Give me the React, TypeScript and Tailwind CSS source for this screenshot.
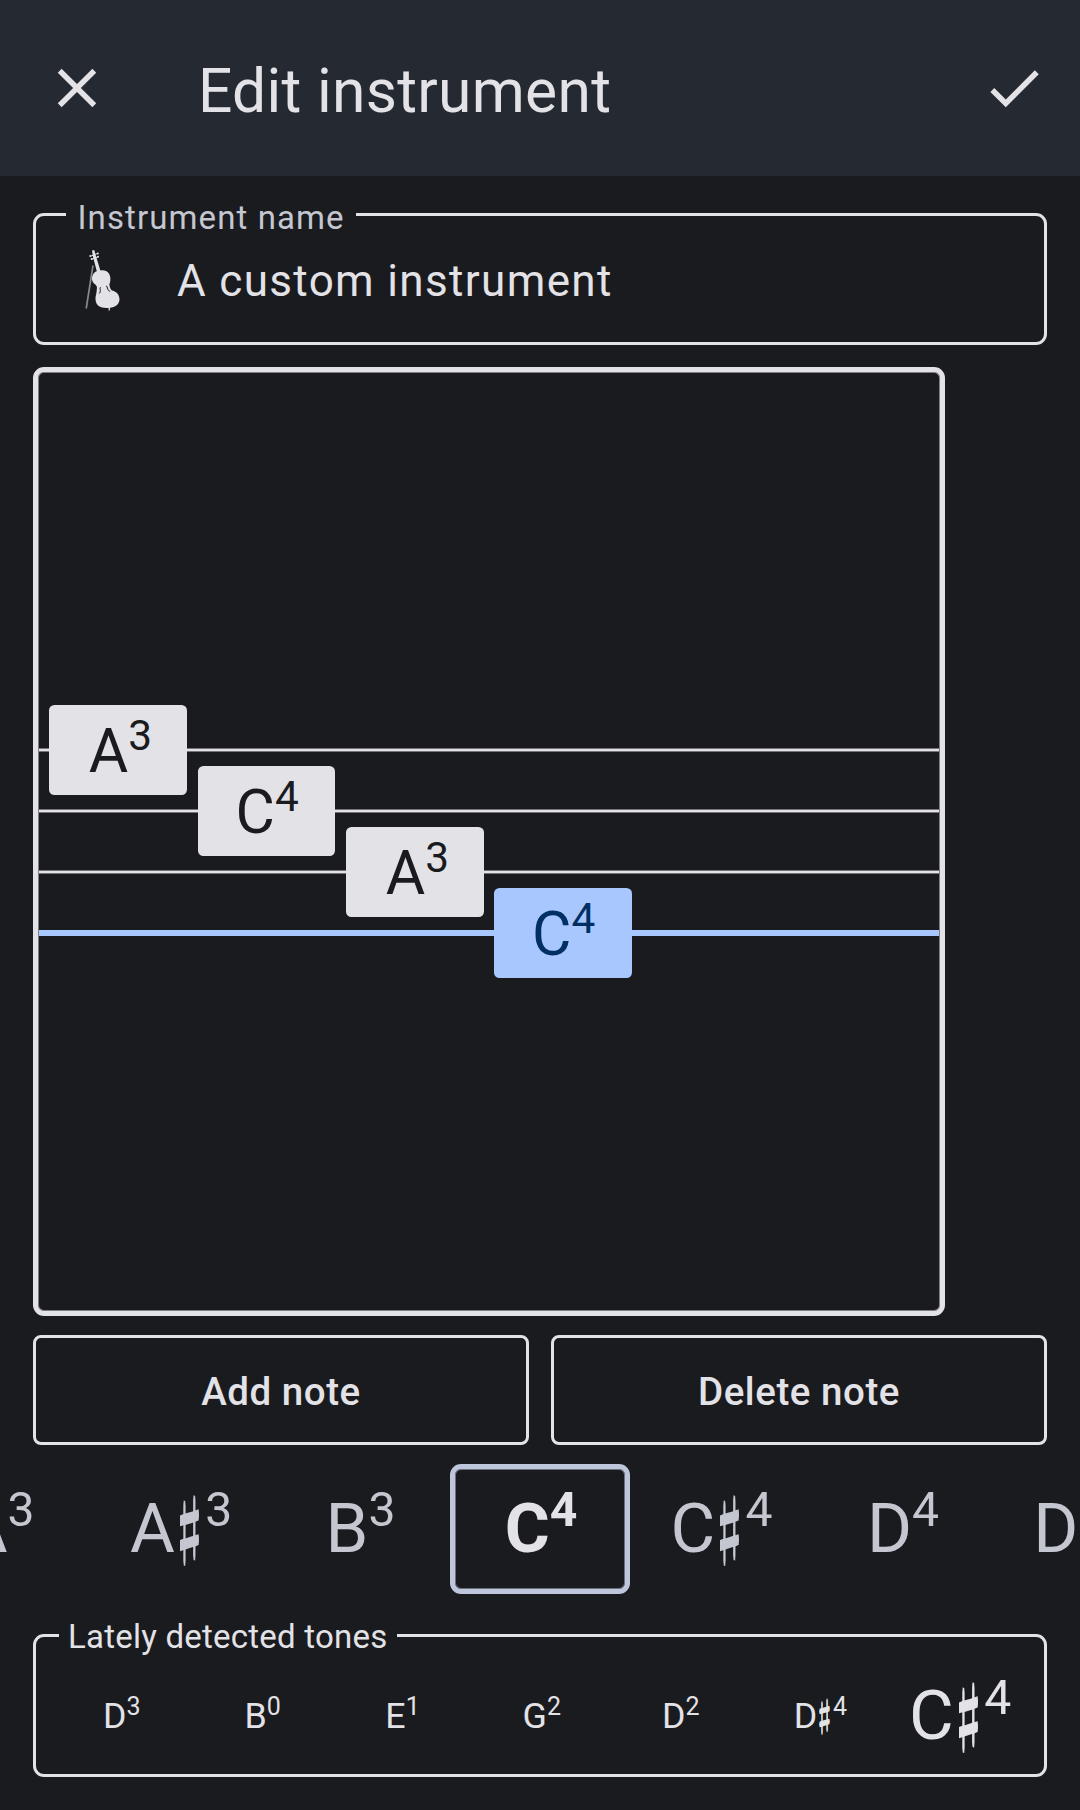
import type { ReactNode } from "react";

type Tone = { name: string; octave: number; sharp?: boolean };

// Optical correction of each letter inside its cell.
const nudge: Record<string, string> = {
  A: "pl-[0.09em]",
  B: "pl-[0.06em]",
  C: "pl-[0.03em]",
  D: "pl-0",
  E: "pl-[0.07em]",
  G: "pl-[0.04em]",
  "A♯": "pl-[0.12em]",
};

function Note({ name, octave, sharp, raise = "align-[0.52em]" }: Tone & { raise?: string }) {
  return (
    <span className={"whitespace-nowrap leading-none " + (nudge[sharp ? name + "♯" : name] ?? "")}>
      {name}
      {sharp && (
        <span className="inline-flex w-[0.442em] origin-[50%_60%] justify-center font-['DejaVu_Sans',sans-serif] leading-[0] [text-shadow:0_0.022em,0_-0.022em] [transform:translate(-0.012em,0.06em)_skewY(25deg)_scale(0.86,1.4)]">
          ♯
        </span>
      )}
      <span className={"text-[0.7em] leading-[0] " + raise}>{octave}</span>
    </span>
  );
}

const strings = [
  { name: "A", octave: 3, row: "top-[333px]", chip: "left-[11px]" },
  { name: "C", octave: 4, row: "top-[394px]", chip: "left-[159.5px]" },
  { name: "A", octave: 3, row: "top-[455px]", chip: "left-[308px]" },
  { name: "C", octave: 4, row: "top-[516px]", chip: "left-[456px]" },
];

const picker: Tone[] = [
  { name: "A", octave: 3 },
  { name: "A", octave: 3, sharp: true },
  { name: "B", octave: 3 },
  { name: "C", octave: 4 },
  { name: "C", octave: 4, sharp: true },
  { name: "D", octave: 4 },
  { name: "D", octave: 4, sharp: true },
];

const detected: Tone[] = [
  { name: "D", octave: 3 },
  { name: "B", octave: 0 },
  { name: "E", octave: 1 },
  { name: "G", octave: 2 },
  { name: "D", octave: 2 },
  { name: "D", octave: 4, sharp: true },
  { name: "C", octave: 4, sharp: true },
];

function Violin() {
  return (
    <svg className="mt-[3px]" width="36" height="62" viewBox="0 0 36 62" fill="#e3e2e6">
      <path d="M7 .6 9.300 0 10.200 3.500 15.800 22h-3.800L8 7z" />
      <path d="M5 6.400 12.800 3.400M6.200 9.400 13 6.800" stroke="#e3e2e6" strokeWidth="1" />
      <circle cx="5.300" cy="6" r="1" />
      <circle cx="12.800" cy="3.600" r="1" />
      <circle cx="6.700" cy="9" r="1" />
      <circle cx="13" cy="6.700" r="1" />
      <path d="M9 23C11 20.600 18 19.400 21.500 21.200c3.200 1.700 4.300 5.500 3.800 9.800-.2 1.800-1.100 2.800-.8 4.500.3 2.200 1.300 4.200 2.600 5 4.400.9 7.400 4.500 7.400 8.700 0 5.200-4.500 8.300-11.500 8.700-7.600.4-12.100-2-12.500-8.700-.2-3 1-5.200 1.100-7.700.1-1.800.6-3.500.2-5-.4-1.300-1.700-1.900-3.200-3.500C6.400 30.400 6.500 26 9 23Z" />
      <path d="M15.800 37.300c-1.400.4-.5 2-.5 3.500s-.5 2.300-1.400 2.600M21 36c1.200-.2 1.200 1.800 1.800 3.200s1.300 2 2.400 1.900" fill="none" stroke="#1a1b1f" strokeWidth="1" />
      <path d="M23.600 57h1.300v3.500h-1.300z" />
      <path d="M8 15.500 1.200 58.500" stroke="#e3e2e6" strokeWidth="1.700" strokeOpacity=".55" />
    </svg>
  );
}

function Outlined({ label, box, legend, children }: { label: string; box: string; legend: string; children: ReactNode }) {
  return (
    <section className={"relative flex shrink-0 items-center rounded-[11px] border-[3px] border-[#e3e2e6] " + box}>
      <span className={"absolute bg-[#1a1b1f] whitespace-nowrap text-[33px] leading-[36px] " + legend}>{label}</span>
      {children}
    </section>
  );
}

export default function App() {
  return (
    <main className="flex h-[1810px] w-[1080px] flex-col overflow-hidden bg-[#1a1b1f] font-['Roboto',sans-serif] text-[#e3e2e6]">
      <header className="flex h-44 shrink-0 items-center bg-[#252931] pr-[33px] pl-11">
        <svg className="size-[66px]" viewBox="0 0 24 24" fill="currentColor">
          <path d="M19 6.410 17.590 5 12 10.590 6.410 5 5 6.410 10.590 12 5 17.590 6.410 19 12 13.410 17.590 19 19 17.590 13.410 12z" />
        </svg>
        <h1 className="ml-[88px] flex-1 pt-[8px] text-[60.5px] leading-none tracking-[0.3px]">Edit instrument</h1>
        <svg className="size-[66px]" viewBox="0 0 24 24" fill="currentColor">
          <path d="M9 16.170 4.830 12l-1.420 1.410L9 19 21 7l-1.410-1.410z" />
        </svg>
      </header>

      <Outlined
        label="Instrument name"
        box="mx-[33px] mt-[37px] h-[132px] pl-[49px]"
        legend="left-[30px] top-[-16px] w-[290px] pl-[11.500px] tracking-[1.1px] text-[#c4c6d0]"
      >
        <Violin />
        <span className="ml-[56px] pt-[4px] text-[44px] leading-none tracking-[1.35px]">A custom instrument</span>
      </Outlined>

      <section className="relative mx-[33px] mt-[22px] h-[949px] w-[912px] shrink-0 rounded-[11px] border-[5px] border-[#e3e2e6] shadow-[inset_0_0_0_1px_#e3e2e680]">
        {strings.map((s, i) => (
          <div key={i} className={"absolute inset-x-0 flex h-[90px] items-center " + s.row}>
            <div
              className={
                i === 3
                  ? "mx-px h-[6px] w-full bg-[#a9c7ff]"
                  : "mx-px h-[2px] w-full bg-[#e3e2e6] shadow-[0_1px_0_#e3e2e673,0_-1px_0_#e3e2e673]"
              }
            />
            <div
              className={
                "absolute flex h-full w-[137.5px] items-center justify-center rounded-[5.5px] pt-[5px] text-[60.5px] " +
                s.chip +
                (i === 3 ? " bg-[#a9c7ff] text-[#003063]" : " bg-[#e3e2e6] text-[#1a1b1f]")
              }
            >
              <Note name={s.name} octave={s.octave} />
            </div>
          </div>
        ))}
      </section>

      <div className="mx-[33px] mt-[19px] flex h-[110px] shrink-0 gap-[22px]">
        {["Add note", "Delete note"].map((t) => (
          <button
            key={t}
            className="flex-1 rounded-[8px] border-[3px] border-[#e3e2e6] pt-[4px] text-[38.5px] font-medium tracking-[0.55px]"
          >
            {t}
          </button>
        ))}
      </div>

      <div className="mt-[19px] flex h-[130px] shrink-0 justify-center text-[68.75px]">
        {picker.map((t, i) => (
          <div
            key={i}
            className={
              "flex shrink-0 items-center justify-center rounded-[11px] " +
              (i === 3
                ? "mx-[0.5px] w-[180.5px] border-[5px] border-[#bec6dc] font-bold shadow-[inset_0_0_0_1px_#bec6dc80]"
                : "w-[181.5px] text-[#c4c6d0]")
            }
          >
            <Note {...t} raise="align-[0.54em]" />
          </div>
        ))}
      </div>

      <Outlined
        label="Lately detected tones"
        box="mx-[33px] mt-[40px] h-[143px] pr-[14px] pl-4 pt-[22px]"
        legend="left-[23px] top-[-18px] w-[338px] pl-[9px] tracking-[0.23px]"
      >
        {detected.map((t, i) => (
          <div
            key={i}
            className={"flex flex-1 basis-0 items-center justify-center " + (i === 6 ? "text-[68.75px]" : "text-[35.75px]")}
          >
            <Note {...t} />
          </div>
        ))}
      </Outlined>
    </main>
  );
}
